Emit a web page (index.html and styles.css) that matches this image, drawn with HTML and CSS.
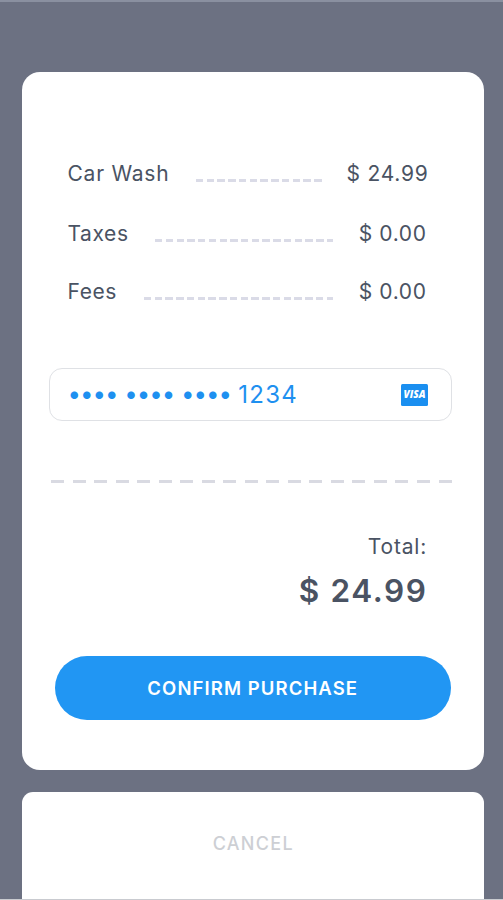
FILE: index.html
```
<!DOCTYPE html>
<html lang="en">
<head>
  <meta charset="UTF-8">
  <meta name="viewport" content="width=device-width, initial-scale=1.0">
  <title>Confirm Purchase</title>
  <link rel="stylesheet" href="styles.css">
</head>
<body>
  <div class="screen">
    <div class="receipt">
      <div class="items">
        <div class="item item-main">
          <span>Car Wash</span>
          <span class="leader"></span>
          <span class="price">$ 24.99</span>
        </div>
        <div class="item">
          <span>Taxes</span>
          <span class="leader"></span>
          <span class="price">$ 0.00</span>
        </div>
        <div class="item">
          <span>Fees</span>
          <span class="leader"></span>
          <span class="price">$ 0.00</span>
        </div>
      </div>

      <div class="card-field">
        <span class="dots">••••</span>
        <span class="dots">••••</span>
        <span class="dots">••••</span>
        <span class="last-four">1234</span>
        <svg class="visa" viewBox="0 0 27 22" width="27" height="22">
          <rect width="27" height="22" rx="1.5" fill="#1a8ff0"/>
          <text x="2.5" y="14.3" textLength="22" lengthAdjust="spacingAndGlyphs">VISA</text>
        </svg>
      </div>

      <div class="divider"></div>

      <div class="total">
        <div class="total-label">Total:</div>
        <div class="total-amount">$ 24.99</div>
      </div>

      <button class="confirm">CONFIRM PURCHASE</button>
    </div>

    <button class="cancel">CANCEL</button>
  </div>
</body>
</html>
```
FILE: styles.css
```
* { box-sizing: border-box; }
body { margin: 0; font-family: Inter, "Liberation Sans", sans-serif; background: #6c7182; color: #4a5363; }
button { border: none; font-family: inherit; padding: 0; }

.screen { height: 900px; padding: 70px 19px 0 21.5px; border-top: 2px solid #8a90a0; border-bottom: 1px solid #c9cbd0; display: flex; flex-direction: column; overflow: hidden; }
.receipt { height: 698px; flex: none; background: #fff; border-radius: 18px; padding: 87px 32px 0 27px; }

.items { padding: 0 25.5px 0 19px; font-size: 21px; letter-spacing: 0.6px; }
.item { display: flex; height: 30px; line-height: 30px; margin-bottom: 28px; white-space: nowrap; }
.item-main { margin-bottom: 30px; margin-right: -2px; letter-spacing: 0.75px; }
.leader { flex: 1; height: 3px; margin: 20px 25.5px 0 26.5px; background: repeating-linear-gradient(90deg, #dadbe7 0 7.3px, transparent 7.3px 10.75px); }
.item-main .leader { margin: 19.5px 24px 0 27px; }

.card-field { display: flex; align-items: center; height: 53px; margin-top: 61px; padding: 0 23.5px 0 18px; border: 1.5px solid #dfe1e5; border-radius: 13px; color: #1e90f0; font-size: 24px; }
.dots { letter-spacing: -1px; width: 56.7px; line-height: 30px; margin-bottom: 1px; white-space: nowrap; }
.last-four { margin-left: 0.8px; letter-spacing: 1.2px; line-height: 30px; }
.visa { margin-left: auto; }
.visa text { font-family: "Open Sans", sans-serif; font-size: 10px; font-weight: 800; font-style: italic; fill: #fff; }

.divider { height: 3px; margin: 59px 0 0 2px; background: repeating-linear-gradient(90deg, #d9dae2 0 13px, transparent 13px 21.53px); }

.total { margin-top: 49px; padding-right: 25px; text-align: right; }
.total-label { font-size: 21px; line-height: 30px; letter-spacing: 0.8px; }
.total-amount { font-size: 31.5px; line-height: 40px; margin: 9px -0.5px 0 0; font-weight: 600; letter-spacing: 1.6px; }

.confirm { display: block; width: 396.5px; height: 64px; margin: 45px 0 0 6px; border-radius: 32px; background: #2196f3; color: #fff; font-size: 18.5px; font-weight: 600; letter-spacing: 1.1px; }
.cancel { flex: 1; margin-top: 22px; padding: 0 0 4px 1px; background: #fff; border-radius: 11px 11px 0 0; color: #cdcfd4; font-size: 18px; font-weight: 500; letter-spacing: 1.3px; }
```
